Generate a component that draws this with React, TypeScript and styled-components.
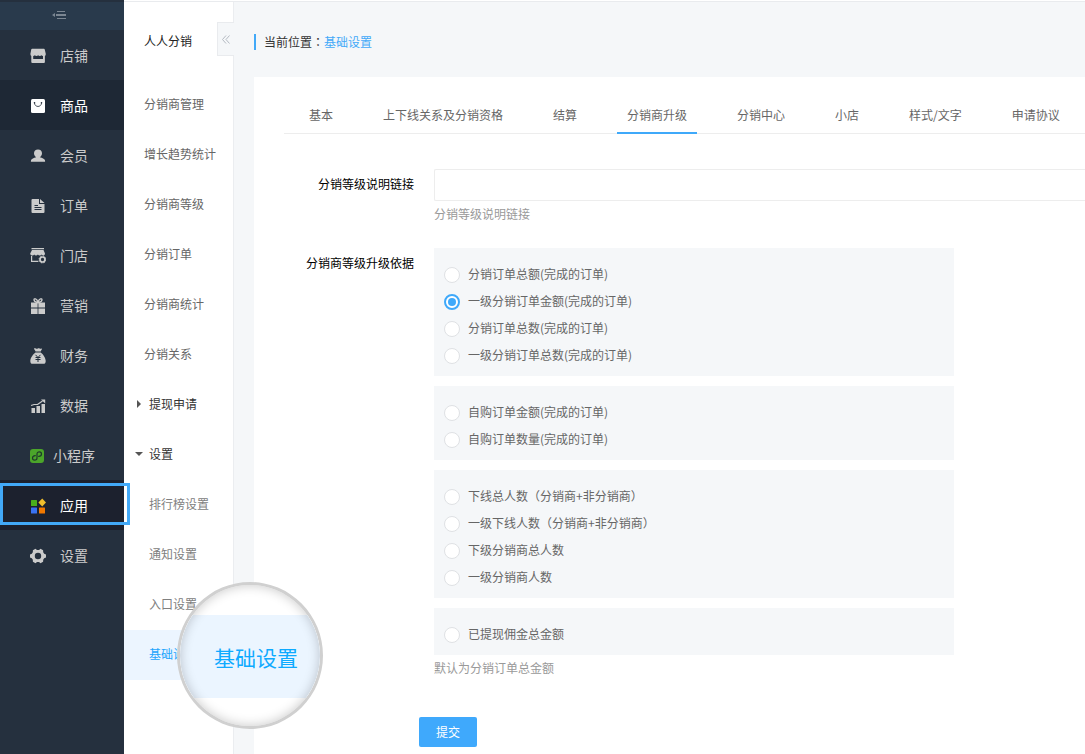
import React, { useState } from 'react';
import styled, { createGlobalStyle, css } from 'styled-components';

const GlobalStyle = createGlobalStyle`
  *, *::before, *::after { box-sizing: border-box; }
  body {
    margin: 0;
    font-family: "Noto Sans CJK SC", "Liberation Sans", sans-serif;
    font-size: 12px;
    line-height: 18px;
    color: #666;
    background: #f5f7f9;
  }
  a { color: inherit; text-decoration: none; }
  button, input { font: inherit; }
`;

const Shell = styled.div`
  display: flex;
  min-height: 100vh;
  overflow: hidden;
`;

/* ---------- primary sidebar ---------- */

const Sidebar = styled.nav`
  flex: 0 0 124px;
  padding-top: 2px;
  background: #25303e;
`;

const SidebarToggle = styled.button`
  display: flex;
  align-items: center;
  justify-content: center;
  width: 100%;
  height: 28px;
  padding: 0 6px 2px 0;
  border: 0;
  background: #293a4c;
  color: #7b8692;
`;

const SidebarLink = styled.a<{ $state?: 'active' | 'current' }>`
  position: relative;
  display: flex;
  align-items: center;
  gap: 7px;
  height: 50px;
  padding-left: 30px;
  font-size: 14px;
  line-height: 20px;
  color: #cbcbcb;
  ${(p) => p.$state === 'active' && css`background: #1e2835; color: #fff;`}
  ${(p) => p.$state === 'current' && css`background: #1c212e; color: #fff;`}
`;

const SidebarText = styled.span`
  width: 42px;
  text-align: center;
`;

const HighlightFrame = styled.span`
  position: absolute;
  z-index: 2;
  top: 3px;
  left: 0;
  width: 130px;
  height: 42px;
  border: 3px solid #42a9f8;
`;

/* ---------- secondary menu ---------- */

const Workspace = styled.div`
  flex: 1;
  min-width: 0;
  display: flex;
  flex-direction: column;
`;

const TopStrip = styled.div`
  height: 2px;
  background: #fff;
  border-bottom: 1px solid #e9ebee;
`;

const Columns = styled.div`
  flex: 1;
  display: flex;
`;

const SubMenu = styled.nav`
  position: relative;
  flex: 0 0 110px;
  background: #fff;
  border-right: 1px solid #ebedf0;
`;

const SubTitle = styled.h2`
  margin: 0;
  padding-left: 20px;
  font-size: 12px;
  font-weight: 400;
  line-height: 78px;
  color: #222;
`;

const CollapseTab = styled.button`
  position: absolute;
  top: 20px;
  right: -1px;
  display: flex;
  align-items: center;
  justify-content: center;
  width: 17px;
  height: 34px;
  padding: 0;
  border: 1px solid #e9ebee;
  border-right: 0;
  background: #f5f7f9;
  color: #b4bac2;
`;

const SubLink = styled.a<{ $nested?: boolean; $active?: boolean }>`
  display: block;
  height: 50px;
  padding-left: ${(p) => (p.$nested ? 25 : 20)}px;
  line-height: 48px;
  white-space: nowrap;
  color: ${(p) => (p.$active ? '#1ba4fc' : p.$nested ? '#808080' : '#666')};
  background: ${(p) => (p.$active ? '#ecf5ff' : 'transparent')};
`;

const SubGroup = styled.button`
  display: flex;
  align-items: center;
  width: 100%;
  height: 50px;
  padding: 0 0 2px 10px;
  border: 0;
  background: none;
  color: #333;
`;

const Caret = styled.svg`
  width: 10px;
  height: 10px;
  margin-right: 5px;
  fill: #555;
`;

const Magnifier = styled.div`
  position: absolute;
  z-index: 3;
  top: 580px;
  left: 53px;
  width: 146px;
  height: 147px;
  padding-top: 30px;
  overflow: hidden;
  border: 3px solid #d0d0d0;
  border-radius: 50%;
  background: #fff;

  &::after {
    content: '';
    position: absolute;
    inset: 0;
    border-radius: 50%;
    box-shadow: inset 0 0 12px rgba(0, 0, 0, 0.22);
  }
`;

const MagnifiedRow = styled.span`
  display: block;
  height: 83px;
  padding-left: 34px;
  font-size: 21px;
  line-height: 84px;
  color: #0eaaff;
  background: #ebf5ff;
`;

/* ---------- page ---------- */

const Page = styled.main`
  flex: 1;
  min-width: 0;
  display: flex;
  flex-direction: column;
  padding-left: 20px;
`;

const Breadcrumb = styled.div`
  display: flex;
  align-items: center;
  height: 75px;
  padding-top: 4px;
  color: #333;

  a { color: #42a9f8; }
`;

const Marker = styled.span`
  width: 2px;
  height: 16px;
  margin-right: 8px;
  background: #42a9f8;
`;

const Location = styled.span`
  display: flex;
  line-height: 16px;
`;

/* full-width punctuation set in the middle of its cell */
const Punctuation = styled.span`
  font-family: "Noto Sans CJK TC", sans-serif;
`;

const Card = styled.section`
  flex: 1;
  padding: 20px 0 7px 30px;
  background: #fff;
`;

const Tabs = styled.nav`
  display: flex;
  gap: 30px;
  padding-left: 15px;
  border-bottom: 1px solid #ededed;
`;

const Tab = styled.a<{ $active?: boolean }>`
  flex: none;
  height: 37px;
  margin-bottom: -1px;
  padding: 0 10px;
  border-bottom: 2px solid ${(p) => (p.$active ? '#3fa9fa' : 'transparent')};
  line-height: 36px;
`;

const Form = styled.form`
  display: flex;
  flex-direction: column;
  padding-top: 35px;
`;

const Field = styled.div`
  display: grid;
  grid-template-columns: 130px minmax(0, 1fr);
  column-gap: 20px;
`;

const UpgradeField = styled(Field)`
  margin-top: 25px;
`;

const FieldLabel = styled.label`
  line-height: 30px;
  text-align: right;
  color: #000;
`;

const TextInput = styled.input`
  display: block;
  width: 100%;
  height: 32px;
  padding: 0 10px;
  border: 1px solid #ededed;
  border-right: 0;
  border-radius: 2px 0 0 2px;
  background: #fff;
  outline: 0;
`;

const Hint = styled.p`
  margin: 0;
  padding-top: 4px;
  color: #999;
`;

const Groups = styled.div`
  display: flex;
  flex-direction: column;
  gap: 10px;
  max-width: 520px;
`;

const OptionBox = styled.div`
  padding: 12px 10px 8px;
  background: #f5f7f9;
`;

const Option = styled.label`
  display: flex;
  align-items: center;
  gap: 8px;
  height: 27px;
  line-height: 16px;
`;

const Radio = styled.input`
  appearance: none;
  display: grid;
  place-items: center;
  width: 16px;
  height: 16px;
  margin: 2px 0 0;
  border: 1px solid #dfe1e4;
  border-radius: 50%;
  background: #fff;

  &:checked { border: 2px solid #3fa9fa; }
  &:checked::before {
    content: '';
    width: 8px;
    height: 8px;
    border-radius: 50%;
    background: #3fa9fa;
  }
`;

const Submit = styled.button`
  align-self: flex-start;
  width: 58px;
  height: 30px;
  margin: 40px 0 0 135px;
  padding: 0;
  border: 0;
  border-radius: 2px;
  background: #3fa9fc;
  color: #fff;
`;

/* ---------- icons ---------- */

const Glyph = styled.svg`
  flex: none;
  width: 16px;
  height: 16px;
  margin-top: 2px;
  fill: currentColor;
`;

const icons = {
  shop: (
    <Glyph viewBox="0 0 16 16">
      <path d="M2.500 .8h11c.8 0 1.200.4 1.300 1L15.800 6c0 .9-.3 1.500-.9 1.900V14a1 1 0 0 1-1 1H2.300a1 1 0 0 1-1-1V7.900C.700 7.500.4 6.900.4 6l.8-4.200c.1-.6.6-1 1.300-1zM3.200 8v3h9.800V8c-.7 0-1.200-.2-1.600-.8-.4.600-1 .8-1.600.8s-1.300-.2-1.700-.8c-.4.600-1 .8-1.600.8s-1.300-.2-1.700-.8c-.4.600-.9.8-1.600.8z" />
    </Glyph>
  ),
  goods: (
    <Glyph viewBox="0 0 16 16">
      <rect x="1" y="1" width="14" height="14" rx="1.500" />
      <path d="M4.500 5c.3 4.600 6.700 4.600 7 0" fill="none" stroke="#1e2835" strokeWidth=".8" />
      <circle cx="4.500" cy="4.700" r=".8" fill="#1e2835" />
      <circle cx="11.500" cy="4.700" r=".8" fill="#1e2835" />
    </Glyph>
  ),
  member: (
    <Glyph viewBox="0 0 16 16">
      <path d="M8 1.500c2.500 0 4 1.600 4 3.800 0 1.800-.9 3.200-2.200 3.900 2.500.7 4.600 1.400 5.100 2.900.2.600.2 1.200.2 1.700H.9c0-.5 0-1.100.2-1.700.5-1.500 2.600-2.200 5.100-2.900C4.900 8.500 4 7.100 4 5.300c0-2.200 1.500-3.800 4-3.800z" />
    </Glyph>
  ),
  order: (
    <Glyph viewBox="0 0 16 16">
      <path d="M2.500 1H9v5h5.500v8a1 1 0 0 1-1 1h-11a1 1 0 0 1-1-1V2a1 1 0 0 1 1-1z" />
      <path d="M10 1l4.500 4H10z" />
      <path d="M4.500 7.500H8M4.500 9.500h7M4.500 11.500h7" stroke="#25303e" strokeWidth="1" />
    </Glyph>
  ),
  store: (
    <Glyph viewBox="0 0 16 16">
      <path d="M1.500 0H14v1.200H1.500zM2 2h11.500L15 5.600c0 1.200-.8 1.900-1.700 1.900-.8 0-1.400-.4-1.700-1-.4.6-1 1-1.800 1s-1.500-.4-1.900-1c-.4.6-1.100 1-1.900 1s-1.400-.4-1.800-1c-.4.6-.9 1-1.700 1C1 7.500.2 6.800.2 5.600z" />
      <path d="M1.600 8v5.300h6.800" fill="none" stroke="currentColor" strokeWidth="1.200" />
      <circle cx="12.500" cy="11.500" r="2.500" fill="none" stroke="currentColor" strokeWidth="1.700" />
      <circle cx="12.500" cy="11.500" r="3.400" fill="none" stroke="currentColor" strokeWidth="1" strokeDasharray="1.500 1.170" />
    </Glyph>
  ),
  gift: (
    <Glyph viewBox="0 0 16 16">
      <path d="M1 4.500h6.600v5H1zM8.400 4.500H15v5H8.400zM1 10.500h6.600V16H1zM8.400 10.500H15V16H8.400z" />
      <path d="M7.600 4.500C6 4.300 4 3.300 4 1.800 4 .2 6.800.2 8 4.300 9.200.2 12 .2 12 1.800c0 1.500-2 2.500-3.600 2.700" fill="none" stroke="currentColor" strokeWidth="1.300" />
    </Glyph>
  ),
  money: (
    <Glyph viewBox="0 0 16 16">
      <path d="M4.200.3c1.200-.5 1.700.5 2.600.5S8 .1 8.900.3c.8.1 1 .6 1.800.4.6-.1 1-.5 1.300-.2.400.5-1 1.700-1.300 3H5.600C5.300 2.200 3.500.9 4.200.3zM5.500 4.500h5.200c2.300 1.700 4.900 5.300 5 8.500 0 2-.8 2.800-2.300 2.800H2.600C1.100 15.800.3 15 .3 13c.1-3.200 2.900-6.800 5.200-8.500z" />
      <path d="M5.500 6.800L8 9.500l2.500-2.700M5.500 9.500h5M5.500 11.500h5M8 9.500V14" fill="none" stroke="#25303e" strokeWidth="1" />
    </Glyph>
  ),
  data: (
    <Glyph viewBox="0 0 16 16">
      <path d="M1.500 10H5v5H1.500zM6.500 8H10v7H6.500zM11.500 6H15v9h-3.500z" />
      <path d="M1 7.500l3-1h3.500L12.500 3" fill="none" stroke="currentColor" strokeWidth="1.200" />
      <path d="M11 1.500h4.200v4z" />
    </Glyph>
  ),
  mini: (
    <Glyph viewBox="0 0 16 16">
      <rect x="0" y="1" width="14" height="14" rx="3" fill="#4ba52a" />
      <path d="M5.300 7.600C3.400 7.800 2.500 8.900 2.500 10.100c0 1.300 1 2.100 2.100 2.100 1.400 0 2.400-.9 2.400-2.200V6c0-1.300 1-2.200 2.400-2.200 1.100 0 2.100.8 2.100 2.100 0 1.200-.9 2.300-2.800 2.500" fill="none" stroke="#1f3a2b" strokeWidth="1.200" strokeLinecap="round" />
    </Glyph>
  ),
  apps: (
    <Glyph viewBox="0 0 16 16">
      <rect x="1" y="2" width="6" height="6" rx=".5" fill="#4aae1c" />
      <path d="M12.200.5L16 4.500l-3.800 4L8.400 4.500z" fill="#f0be2c" />
      <rect x="1" y="9.500" width="6" height="6" rx=".5" fill="#3a72f0" />
      <rect x="9" y="9.500" width="6" height="6" rx=".5" fill="#f07800" />
    </Glyph>
  ),
  gear: (
    <Glyph viewBox="0 0 16 16">
      <path
        fillRule="evenodd"
        d="M5.500.8l1.500 1.100h2L10.500.8l2.600 1.400.1 2 1 1.600 1.800.7v3l-1.800.7-1 1.600-.1 2-2.600 1.400L9 14.100H7l-1.500 1.100-2.600-1.400-.1-2-1-1.600L0 9.500v-3l1.800-.7 1-1.600.1-2zM8 4.800a3.200 3.200 0 1 0 0 6.400 3.200 3.200 0 0 0 0-6.400z"
      />
    </Glyph>
  ),
};

const ToggleIcon = () => (
  <svg width="14" height="10" viewBox="0 0 14 10" fill="currentColor">
    <path d="M0 5l3-2v4z" />
    <rect x="5" y="1" width="8" height="1" />
    <rect x="4" y="4" width="10" height="2" />
    <rect x="5" y="8" width="9" height="1" />
  </svg>
);

const mainMenu: { icon: keyof typeof icons; text: string; state?: 'active' | 'current' }[] = [
  { icon: 'shop', text: '店铺' },
  { icon: 'goods', text: '商品', state: 'active' },
  { icon: 'member', text: '会员' },
  { icon: 'order', text: '订单' },
  { icon: 'store', text: '门店' },
  { icon: 'gift', text: '营销' },
  { icon: 'money', text: '财务' },
  { icon: 'data', text: '数据' },
  { icon: 'mini', text: '小程序' },
  { icon: 'apps', text: '应用', state: 'current' },
  { icon: 'gear', text: '设置' },
];

const subLinks = ['分销商管理', '增长趋势统计', '分销商等级', '分销订单', '分销商统计', '分销关系'];
const settingLinks = ['排行榜设置', '通知设置', '入口设置', '基础设置'];
const tabs = ['基本', '上下线关系及分销资格', '结算', '分销商升级', '分销中心', '小店', '样式/文字', '申请协议'];

const optionGroups = [
  ['分销订单总额(完成的订单)', '一级分销订单金额(完成的订单)', '分销订单总数(完成的订单)', '一级分销订单总数(完成的订单)'],
  ['自购订单金额(完成的订单)', '自购订单数量(完成的订单)'],
  ['下线总人数（分销商+非分销商）', '一级下线人数（分销商+非分销商）', '下级分销商总人数', '一级分销商人数'],
  ['已提现佣金总金额'],
];

const Label = ({ text }: { text: string }) => (
  <span>
    {text.split(/([（）：])/).map((part, i) =>
      i % 2 ? <Punctuation key={i} lang="zh-TW">{part}</Punctuation> : part
    )}
  </span>
);

export default function App() {
  const [basis, setBasis] = useState(optionGroups[0][1]);

  return (
    <>
      <GlobalStyle />
      <Shell>
        <Sidebar>
          <SidebarToggle type="button" aria-label="收起菜单">
            <ToggleIcon />
          </SidebarToggle>
          {mainMenu.map((m) => (
            <SidebarLink key={m.text} href="#" $state={m.state}>
              {icons[m.icon]}
              <SidebarText>{m.text}</SidebarText>
              {m.state === 'current' && <HighlightFrame />}
            </SidebarLink>
          ))}
        </Sidebar>
        <Workspace>
          <TopStrip />
          <Columns>
            <SubMenu>
              <SubTitle>人人分销</SubTitle>
              <CollapseTab type="button" aria-label="收起">
                <svg width="8" height="9" viewBox="0 0 8 9" fill="none" stroke="currentColor" strokeWidth="1">
                  <path d="M4 .5l-3.500 4 3.500 4M7.500.5L4 4.500l3.500 4" />
                </svg>
              </CollapseTab>
              {subLinks.map((t) => (
                <SubLink key={t} href="#">{t}</SubLink>
              ))}
              <SubGroup type="button">
                <Caret viewBox="0 0 10 10"><path d="M3 1l4 4-4 4z" /></Caret>
                提现申请
              </SubGroup>
              <SubGroup type="button">
                <Caret viewBox="0 0 10 10"><path d="M1 3h8L5 7z" /></Caret>
                设置
              </SubGroup>
              {settingLinks.map((t) => (
                <SubLink key={t} href="#" $nested $active={t === '基础设置'}>{t}</SubLink>
              ))}
              <Magnifier aria-hidden="true">
                <MagnifiedRow>基础设置</MagnifiedRow>
              </Magnifier>
            </SubMenu>
            <Page>
              <Breadcrumb>
                <Marker />
                <Location>
                  <Label text="当前位置：" />
                  <a href="#">基础设置</a>
                </Location>
              </Breadcrumb>
              <Card>
                <Tabs>
                  {tabs.map((t) => (
                    <Tab key={t} href="#" $active={t === '分销商升级'}>{t}</Tab>
                  ))}
                </Tabs>
                <Form onSubmit={(e) => e.preventDefault()}>
                  <Field>
                    <FieldLabel htmlFor="level-link">分销等级说明链接</FieldLabel>
                    <div>
                      <TextInput id="level-link" type="text" />
                      <Hint>分销等级说明链接</Hint>
                    </div>
                  </Field>
                  <UpgradeField role="radiogroup" aria-labelledby="basis-label">
                    <FieldLabel as="span" id="basis-label">分销商等级升级依据</FieldLabel>
                    <div>
                      <Groups>
                        {optionGroups.map((group) => (
                          <OptionBox key={group[0]}>
                            {group.map((t) => (
                              <Option key={t}>
                                <Radio type="radio" name="basis" checked={basis === t} onChange={() => setBasis(t)} />
                                <Label text={t} />
                              </Option>
                            ))}
                          </OptionBox>
                        ))}
                      </Groups>
                      <Hint>默认为分销订单总金额</Hint>
                    </div>
                  </UpgradeField>
                  <Submit type="submit">提交</Submit>
                </Form>
              </Card>
            </Page>
          </Columns>
        </Workspace>
      </Shell>
    </>
  );
}
